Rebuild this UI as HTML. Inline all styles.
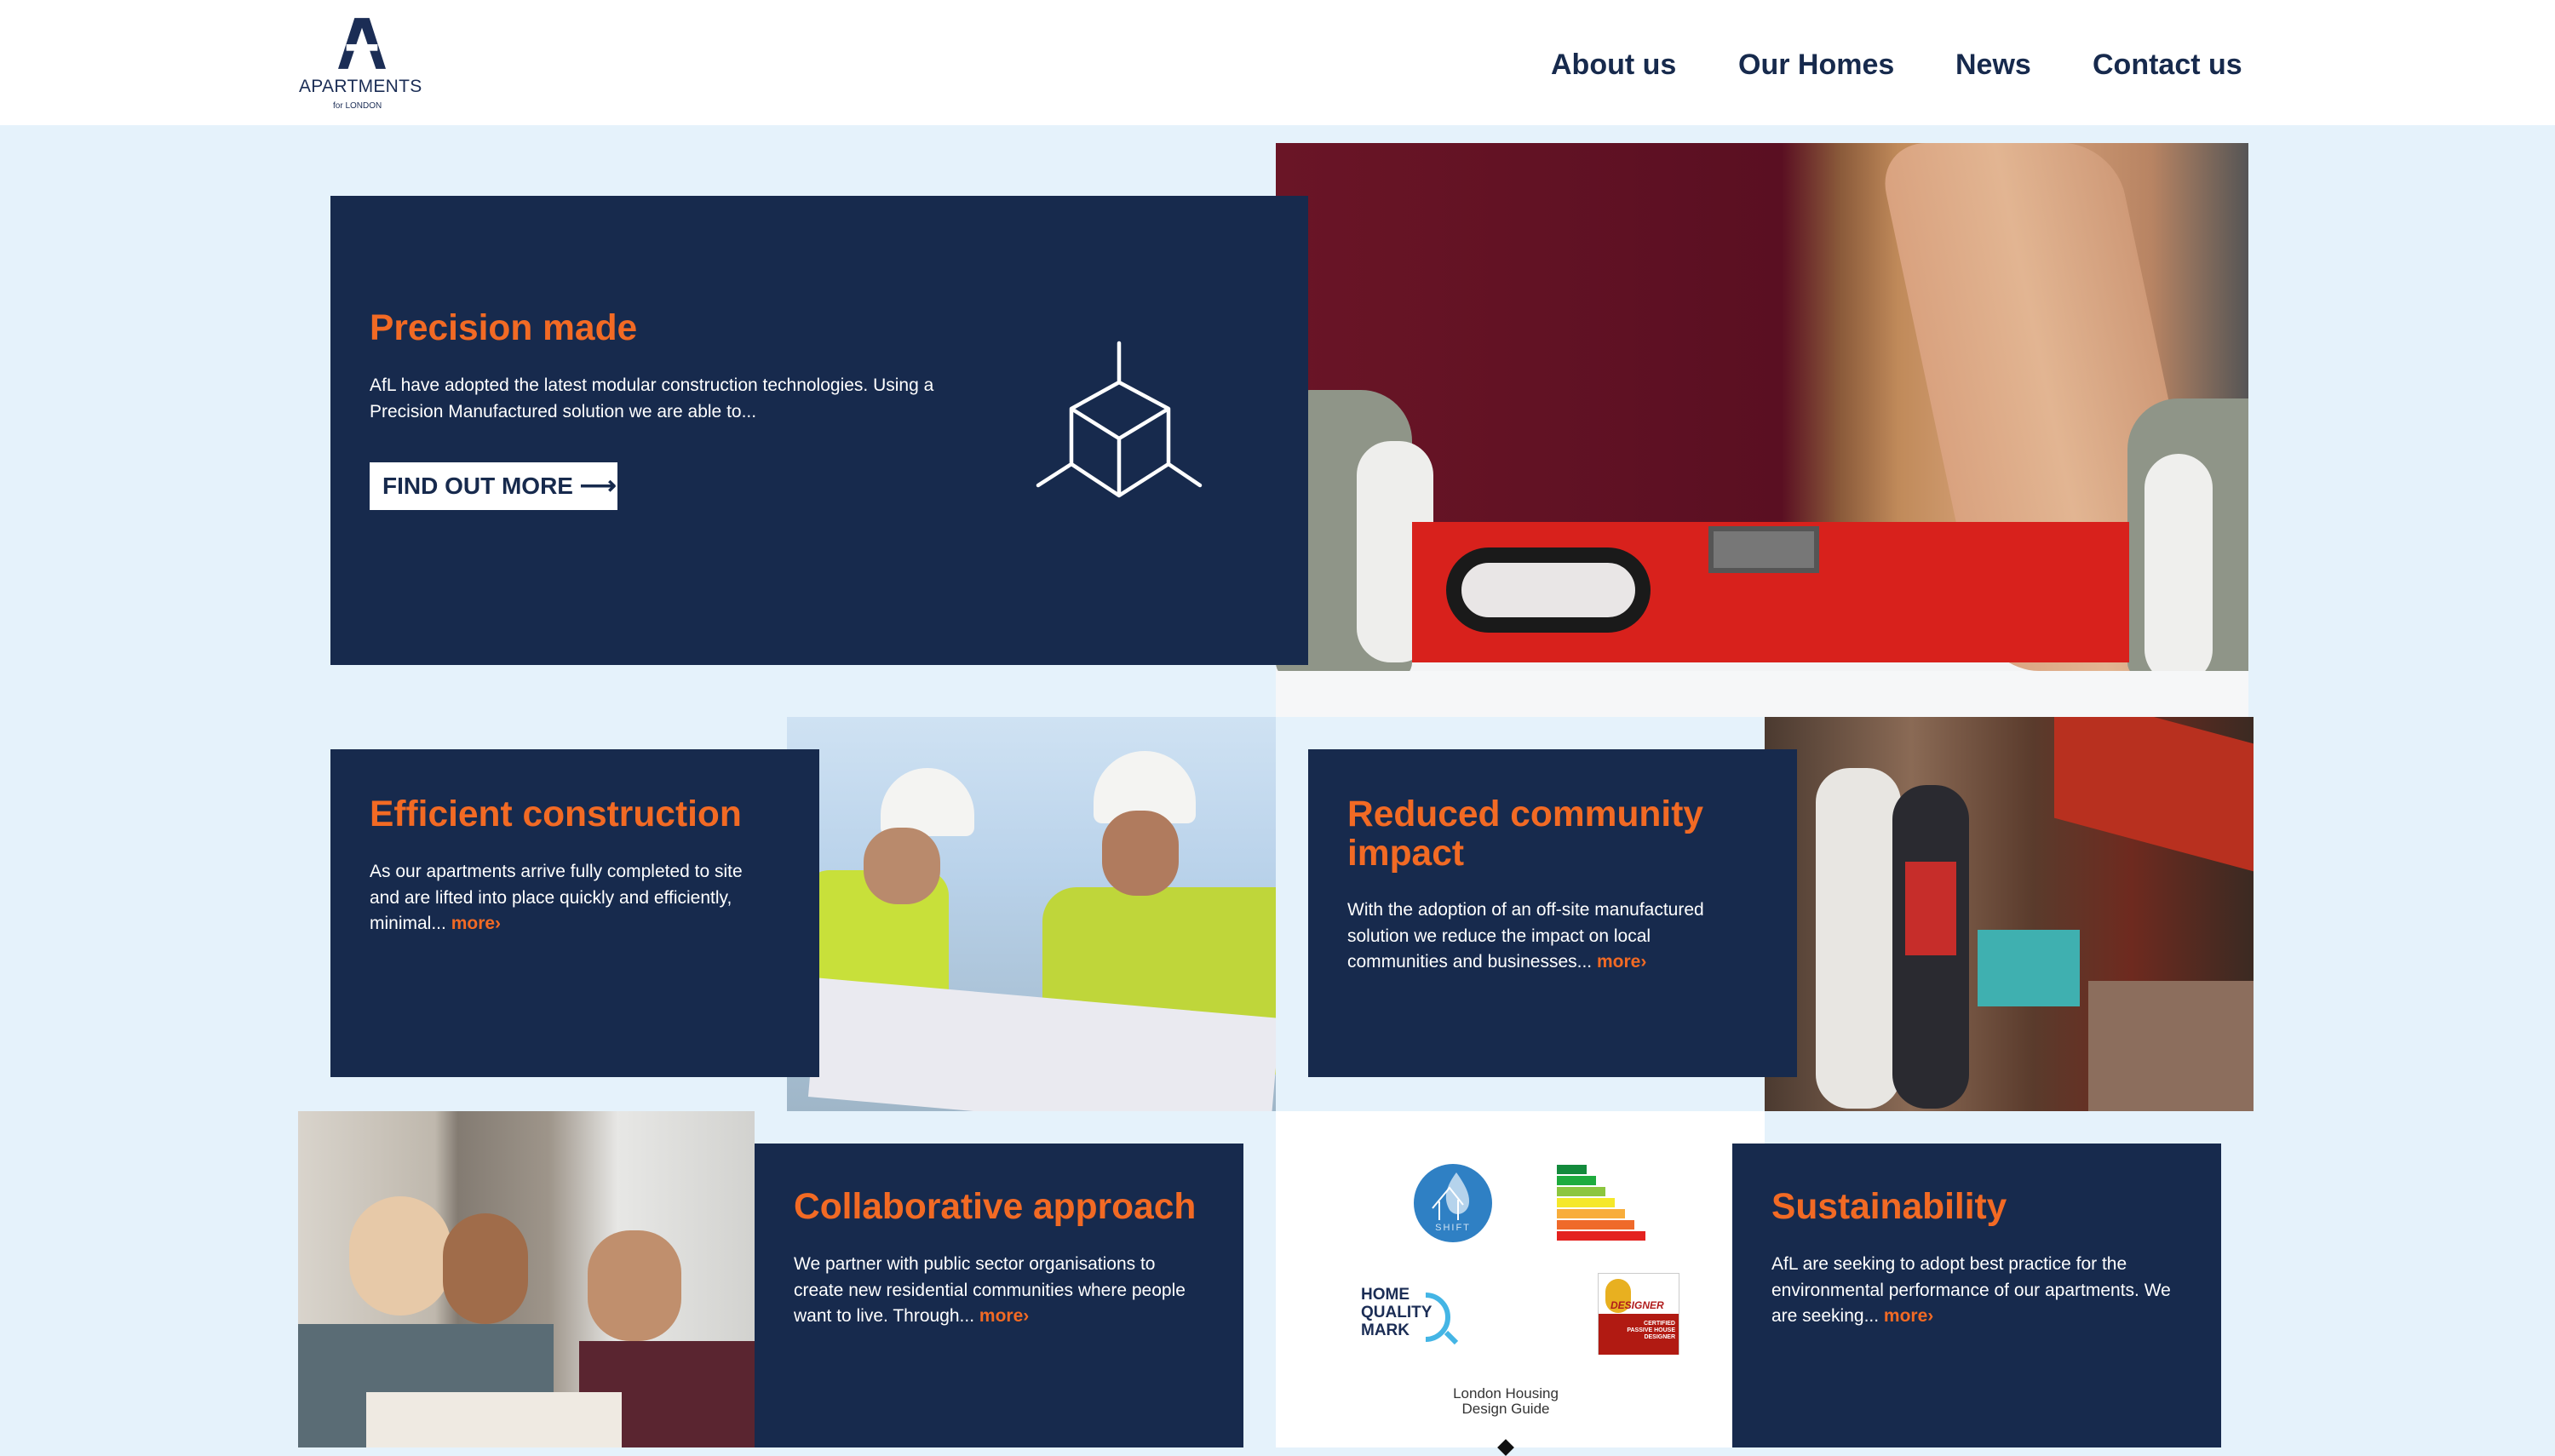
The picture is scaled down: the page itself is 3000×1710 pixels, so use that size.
<!DOCTYPE html>
<html><head><meta charset="utf-8"><style>
*{margin:0;padding:0;box-sizing:border-box}
body{width:3000px;height:1700px;overflow:hidden;background:#e5f2fb;font-family:"Liberation Sans",Arial,sans-serif;position:relative}
.hdr{position:absolute;left:0;top:0;width:3000px;height:147px;background:#fff}
.nav{position:absolute;top:57px;font-size:34px;font-weight:bold;color:#172a4d}
.abs{position:absolute}
.box{position:absolute;background:#172a4d;color:#fff}
.box h2{position:absolute;left:46px;color:#f26a24;font-size:42.5px;font-weight:bold;line-height:46px}
.box p{position:absolute;left:46px;font-size:21px;line-height:30.6px;color:#fff}
.more{color:#f26a24;font-weight:bold}
</style></head><body>
<div class="hdr">
 <svg class="abs" style="left:397px;top:20px" width="56" height="62" viewBox="0 0 58 62"><polygon points="20,0 38,0 58,62 46,62 29,12 12,62 0,62" fill="#1b2d55"/><rect x="10" y="32" width="38" height="8" fill="#fff"/></svg>
 <div class="abs" style="left:351px;top:90px;font-size:21px;color:#1b2d55;letter-spacing:0.3px">APARTMENTS</div>
 <div class="abs" style="left:391px;top:119px;font-size:10px;color:#1b2d55">for LONDON</div>
 <div class="nav" style="left:1821px">About us</div>
 <div class="nav" style="left:2041px">Our Homes</div>
 <div class="nav" style="left:2296px">News</div>
 <div class="nav" style="left:2457px">Contact us</div>
</div>

<div class="abs" style="left:1498px;top:168px;width:1142px;height:674px;background:#f3f4f5;overflow:hidden">
 <div class="abs" style="left:0;top:0;width:1142px;height:610px;background:linear-gradient(90deg,#6a1526 0%,#5a0f22 52%,#8a5a3a 58%,#c08a5a 64%,#d9a57c 75%,#b88463 90%,#555 100%)"></div>
 <div class="abs" style="left:770px;top:0;width:280px;height:620px;background:linear-gradient(90deg,#d9a27f,#e2b592,#cf9a78);transform:skewX(12deg);border-radius:60px"></div>
 <div class="abs" style="left:0;top:290px;width:160px;height:340px;background:#8f9588;border-radius:40px 60px 20px 20px"></div>
 <div class="abs" style="left:95px;top:350px;width:90px;height:260px;background:#eeeeec;border-radius:40px"></div>
 <div class="abs" style="left:1000px;top:300px;width:142px;height:330px;background:#8f9588;border-radius:60px 0 0 20px"></div>
 <div class="abs" style="left:1020px;top:365px;width:80px;height:270px;background:#efefed;border-radius:40px"></div>
 <div class="abs" style="left:160px;top:445px;width:842px;height:165px;background:#d8211c"></div>
 <div class="abs" style="left:200px;top:475px;width:240px;height:100px;border:18px solid #1a1a1a;border-radius:50px;background:#e9e6e6"></div>
 <div class="abs" style="left:508px;top:450px;width:130px;height:55px;background:#777;border:6px solid #555"></div>
 <div class="abs" style="left:0;top:620px;width:1142px;height:54px;background:#f6f7f8"></div>
</div>

<div class="box" style="left:388px;top:230px;width:1148px;height:551px">
 <h2 style="top:133px">Precision made</h2>
 <p style="top:208px">AfL have adopted the latest modular construction technologies. Using a<br>Precision Manufactured solution we are able to...</p>
 <div class="abs" style="left:46px;top:313px;width:291px;height:56px;background:#fff;color:#172a4d;font-size:28px;font-weight:bold;line-height:56px;padding-left:15px">FIND OUT MORE <span style="font-size:30px">⟶</span></div>
 <svg class="abs" style="left:0;top:0" width="1148" height="551" viewBox="388 230 1148 551"><g fill="none" stroke="#fff" stroke-width="4.5" stroke-linecap="round" stroke-linejoin="round"><path d="M1314 403V449L1258 480V545L1314 582L1372 545V480L1314 449M1258 480L1314 515L1372 480M1314 515V582M1258 545L1219 570M1372 545L1409 570"/></g></svg>
</div>

<div class="abs" style="left:924px;top:842px;width:574px;height:463px;background:linear-gradient(180deg,#cfe2f3 0%,#b9d2ea 40%,#9fb6c8 100%);overflow:hidden">
 <div class="abs" style="left:110px;top:60px;width:110px;height:80px;background:#f4f4f2;border-radius:55px 55px 10px 10px"></div>
 <div class="abs" style="left:360px;top:40px;width:120px;height:85px;background:#f4f4f2;border-radius:60px 60px 10px 10px"></div>
 <div class="abs" style="left:20px;top:180px;width:170px;height:200px;background:#c8e03a;border-radius:30px"></div>
 <div class="abs" style="left:300px;top:200px;width:274px;height:220px;background:#bfd63a;border-radius:40px 0 0 0"></div>
 <div class="abs" style="left:90px;top:130px;width:90px;height:90px;background:#b98a6c;border-radius:40px"></div>
 <div class="abs" style="left:370px;top:110px;width:90px;height:100px;background:#b07b5e;border-radius:40px"></div>
 <div class="abs" style="left:30px;top:330px;width:544px;height:140px;background:#eaeaf0;transform:rotate(5deg)"></div>
</div>
<div class="box" style="left:388px;top:880px;width:574px;height:385px">
 <h2 style="top:54px">Efficient construction</h2>
 <p style="top:129px">As our apartments arrive fully completed to site<br>and are lifted into place quickly and efficiently,<br>minimal... <span class="more">more›</span></p>
</div>

<div class="abs" style="left:2072px;top:842px;width:574px;height:463px;background:linear-gradient(90deg,#4b3a30 0%,#8a6a55 30%,#5a3b2c 55%,#6e2a1f 75%,#3b2a22 100%);overflow:hidden">
 <div class="abs" style="left:340px;top:0;width:234px;height:150px;background:#b8301f;transform:skewY(15deg)"></div>
 <div class="abs" style="left:60px;top:60px;width:100px;height:400px;background:#e8e6e2;border-radius:40px"></div>
 <div class="abs" style="left:150px;top:80px;width:90px;height:380px;background:#2a2a30;border-radius:40px"></div>
 <div class="abs" style="left:165px;top:170px;width:60px;height:110px;background:#c62d2a"></div>
 <div class="abs" style="left:250px;top:250px;width:120px;height:90px;background:#3fb0b0"></div>
 <div class="abs" style="left:380px;top:310px;width:194px;height:153px;background:#8c6e5d"></div>
</div>
<div class="box" style="left:1536px;top:880px;width:574px;height:385px">
 <h2 style="top:54px">Reduced community<br>impact</h2>
 <p style="top:174px">With the adoption of an off-site manufactured<br>solution we reduce the impact on local<br>communities and businesses... <span class="more">more›</span></p>
</div>

<div class="abs" style="left:350px;top:1305px;width:536px;height:395px;background:linear-gradient(90deg,#d9d4cc 0%,#bfb8ad 30%,#837b72 35%,#9e958a 55%,#e7e7e5 70%,#d2d2cf 100%);overflow:hidden">
 <div class="abs" style="left:60px;top:100px;width:120px;height:140px;background:#e7c9a8;border-radius:60px"></div>
 <div class="abs" style="left:170px;top:120px;width:100px;height:130px;background:#a06c4a;border-radius:50px"></div>
 <div class="abs" style="left:340px;top:140px;width:110px;height:130px;background:#c08f6d;border-radius:50px"></div>
 <div class="abs" style="left:0;top:250px;width:300px;height:145px;background:#5a6c75"></div>
 <div class="abs" style="left:330px;top:270px;width:206px;height:125px;background:#5a2530"></div>
 <div class="abs" style="left:80px;top:330px;width:300px;height:65px;background:#efeae2"></div>
</div>
<div class="box" style="left:886px;top:1343px;width:574px;height:357px">
 <h2 style="top:52px">Collaborative approach</h2>
 <p style="top:127px">We partner with public sector organisations to<br>create new residential communities where people<br>want to live. Through... <span class="more">more›</span></p>
</div>

<div class="abs" style="left:1498px;top:1305px;width:574px;height:395px;background:#fff">
 <svg class="abs" style="left:160px;top:60px" width="96" height="96" viewBox="0 0 96 96"><circle cx="48" cy="48" r="46" fill="#2f80c4"/><path d="M52 12C40 28 36 42 44 56C50 64 62 62 66 52C70 40 62 26 52 12Z" fill="#b5d3ec"/><path d="M24 54L44 30L60 50M32 46V68M54 44V68" fill="none" stroke="#fff" stroke-width="2"/><text x="48" y="80" font-size="11" fill="#cfe2f3" text-anchor="middle" font-family="Liberation Sans" letter-spacing="2">SHIFT</text></svg>
 <div class="abs" style="left:330px;top:63px">
  <div style="width:35px;height:11px;background:#138a3c;margin-bottom:2px"></div>
  <div style="width:46px;height:11px;background:#1eab3e;margin-bottom:2px"></div>
  <div style="width:57px;height:11px;background:#8cc63f;margin-bottom:2px"></div>
  <div style="width:68px;height:11px;background:#f5e82a;margin-bottom:2px"></div>
  <div style="width:80px;height:11px;background:#f8ad3b;margin-bottom:2px"></div>
  <div style="width:91px;height:11px;background:#ef6a2a;margin-bottom:2px"></div>
  <div style="width:104px;height:11px;background:#e4221f"></div>
 </div>
 <div class="abs" style="left:100px;top:205px;font-size:19px;line-height:21px;font-weight:bold;color:#1b2d55">HOME<br>QUALITY<br>MARK</div>
 <svg class="abs" style="left:170px;top:210px" width="50" height="66" viewBox="0 0 50 66"><path d="M6 6A26 26 0 1 1 6 58" fill="none" stroke="#44b5e5" stroke-width="6"/><path d="M30 50L42 62" stroke="#44b5e5" stroke-width="6"/></svg>
 <div class="abs" style="left:378px;top:190px;width:96px;height:96px;border:1px solid #ccc;background:#fff">
  <div class="abs" style="left:8px;top:6px;width:30px;height:40px;background:#e8b020;border-radius:15px"></div>
  <div class="abs" style="left:14px;top:30px;font-size:12px;color:#b01c1c;font-style:italic;font-weight:bold">DESIGNER</div>
  <div class="abs" style="left:0;top:47px;width:94px;height:48px;background:#b11a12;color:#fff;font-size:7px;font-weight:bold;text-align:right;padding:8px 4px 0 0;line-height:8px">CERTIFIED<br>PASSIVE HOUSE<br>DESIGNER</div>
 </div>
 <div class="abs" style="left:200px;top:323px;font-size:17px;line-height:18px;color:#333;text-align:center;width:140px">London Housing<br>Design Guide</div>
 <div class="abs" style="left:263px;top:388px;width:14px;height:14px;background:#111;transform:rotate(45deg)"></div>
</div>
<div class="box" style="left:2034px;top:1343px;width:574px;height:357px">
 <h2 style="top:52px">Sustainability</h2>
 <p style="top:127px">AfL are seeking to adopt best practice for the<br>environmental performance of our apartments. We<br>are seeking... <span class="more">more›</span></p>
</div>
</body></html>
